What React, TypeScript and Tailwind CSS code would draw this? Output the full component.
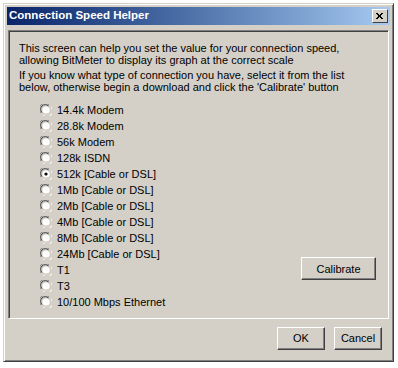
import { useState } from 'react';

const OPTIONS = [
  '14.4k Modem',
  '28.8k Modem',
  '56k Modem',
  '128k ISDN',
  '512k [Cable or DSL]',
  '1Mb [Cable or DSL]',
  '2Mb [Cable or DSL]',
  '4Mb [Cable or DSL]',
  '8Mb [Cable or DSL]',
  '24Mb [Cable or DSL]',
  'T1',
  'T3',
  '10/100 Mbps Ethernet',
];

const Radio = ({ checked }: { checked: boolean }) => (
  <svg width="12" height="12" viewBox="0 0 12 12" className="shrink-0">
    <path d="M1 9 A5.3 5.3 0 0 1 9 1" fill="none" stroke="#808080" strokeWidth="1" />
    <path d="M2 8.5 A4.3 4.3 0 0 1 8.5 2" fill="none" stroke="#404040" strokeWidth="1" />
    <path d="M3 11 A5.3 5.3 0 0 0 11 3" fill="none" stroke="#ffffff" strokeWidth="1" />
    <path d="M3.5 10 A4.3 4.3 0 0 0 10 3.5" fill="none" stroke="#d4d0c8" strokeWidth="1" />
    <circle cx="6" cy="6" r="3.6" fill="#ffffff" />
    {checked && <circle cx="6" cy="6" r="1.6" fill="#000000" />}
  </svg>
);

const Button = ({ label, className = '' }: { label: string; className?: string }) => (
  <button
    className={`h-[23px] bg-[#d4d0c8] text-[11px] text-black border border-t-white border-l-white border-r-[#404040] border-b-[#404040] shadow-[inset_-1px_-1px_0_#808080] ${className}`}
  >
    {label}
  </button>
);

export default function App() {
  const [selected, setSelected] = useState(4);

  return (
    <div className="w-[398px] h-[368px] bg-white p-[3px] font-['Liberation_Sans',Tahoma,sans-serif]">
      <div className="w-[391px] h-[359px] bg-[#d4d0c8] border border-t-[#d4d0c8] border-l-[#d4d0c8] border-r-[#404040] border-b-[#404040] shadow-[inset_1px_1px_0_#ffffff,inset_-1px_-1px_0_#808080] p-[3px] flex flex-col">
        {/* Title bar */}
        <div className="h-[18px] flex items-center justify-between pl-[2px] pr-[2px] bg-gradient-to-r from-[#0a246a] to-[#a6caf0]">
          <span className="text-white font-bold text-[11.5px] leading-none">Connection Speed Helper</span>
          <div className="w-[16px] h-[14px] bg-[#d4d0c8] border border-t-white border-l-white border-r-[#404040] border-b-[#404040] flex items-center justify-center">
            <svg width="8" height="7" viewBox="0 0 8 7">
              <path d="M0 0 L6 6 M1 0 L7 6 M6 0 L0 6 M7 0 L1 6" stroke="#000" strokeWidth="1" />
            </svg>
          </div>
        </div>

        {/* Group panel */}
        <div className="mt-[5px] mx-[1px] h-[289px] border border-t-[#808080] border-l-[#808080] border-r-white border-b-white shadow-[inset_1px_1px_0_#404040] pl-[10px] pr-[12px] pt-[11px] text-[11px] text-black leading-[12px]">
          <p>This screen can help you set the value for your connection speed,</p>
          <p>allowing BitMeter to display its graph at the correct scale</p>
          <p className="mt-[3px]">If you know what type of connection you have, select it from the list</p>
          <p>below, otherwise begin a download and click the 'Calibrate' button</p>

          <div className="flex mt-[9px]">
            <div className="flex flex-col pl-[21px]">
              {OPTIONS.map((label, i) => (
                <div
                  key={label}
                  className="h-[16px] flex items-center gap-[5px] cursor-default"
                  onClick={() => setSelected(i)}
                >
                  <Radio checked={i === selected} />
                  <span>{label}</span>
                </div>
              ))}
            </div>
            <div className="flex-1 flex flex-col justify-end items-end pb-[30px]">
              <Button label="Calibrate" className="w-[75px]" />
            </div>
          </div>
        </div>

        {/* Footer */}
        <div className="flex justify-end gap-[9px] mt-[8px] pr-[8px]">
          <Button label="OK" className="w-[48px]" />
          <Button label="Cancel" className="w-[48px]" />
        </div>
      </div>
    </div>
  );
}
